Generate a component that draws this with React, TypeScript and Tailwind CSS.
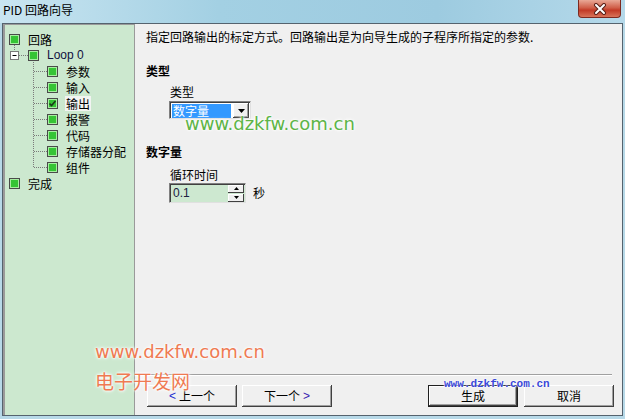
import React from "react";

const CJK = { fontFamily: '"Noto Sans CJK SC", "Liberation Sans", sans-serif' };

function Check({ checked }: { checked?: boolean }) {
  return (
    <div className="relative w-[11px] h-[11px] shrink-0 border border-[#4a4a4a] bg-[#35c435] shadow-[inset_0_0_0_1px_#a6eea0]">
      {checked && (
        <svg className="absolute left-0 top-0" width="9" height="9" viewBox="0 0 9 9">
          <path d="M1.5 4.5 L3.5 6.5 L7.5 2" fill="none" stroke="#1a3a1a" strokeWidth="1.6" />
        </svg>
      )}
    </div>
  );
}

type Row = { label: string; level: number; checked?: boolean; sel?: boolean; latin?: boolean };

const rows: Row[] = [
  { label: "回路", level: 0 },
  { label: "Loop 0", level: 1, latin: true },
  { label: "参数", level: 2 },
  { label: "输入", level: 2 },
  { label: "输出", level: 2, checked: true, sel: true },
  { label: "报警", level: 2 },
  { label: "代码", level: 2 },
  { label: "存储器分配", level: 2 },
  { label: "组件", level: 2 },
  { label: "完成", level: 0 },
];

const levelPad = ["pl-[4px]", "pl-[23px]", "pl-[42px]"];

function Btn({ children, def }: { children: React.ReactNode; def?: boolean }) {
  return (
    <div
      className={
        "w-[90px] h-[22px] flex items-center justify-center bg-[#f0f0f0] text-[12px] text-black " +
        (def
          ? "border border-[#202020] shadow-[inset_-1px_-1px_#404040,inset_1px_1px_#ffffff,inset_-2px_-2px_#a0a0a0]"
          : "shadow-[inset_-1px_-1px_#404040,inset_1px_1px_#ffffff,inset_-2px_-2px_#a0a0a0]")
      }
      style={CJK}
    >
      {children}
    </div>
  );
}

export default function App() {
  const childCenters = [2, 3, 4, 5, 6, 7, 8].map((i) => 39 + 16 * i - 25 + 0.5);
  return (
    <div className="relative w-[625px] h-[419px] bg-[#b7d9e8] flex flex-col overflow-hidden">
      {/* Title bar */}
      <div className="h-[23px] flex items-start justify-between bg-[linear-gradient(90deg,#c9e5f1_0%,#a3d0e3_35%,#9dcbe0_70%,#b5d9ea_100%)]">
        <div className="pl-[3px] pt-[2px] text-[12px] leading-[16px] text-black" style={CJK}>
          PID 回路向导
        </div>
        <div className="mr-[4px] w-[43px] h-[18px] rounded-b-[4px] border border-t-0 border-[#7d2a20] bg-[linear-gradient(180deg,#e9a896_0%,#d0604a_45%,#c23a26_60%,#d8745a_100%)] flex items-center justify-center">
          <svg width="14" height="12" viewBox="0 0 14 12">
            <path d="M3 2 L11 10 M11 2 L3 10" stroke="#5a2018" strokeWidth="4" strokeLinecap="round" />
            <path d="M3 2 L11 10 M11 2 L3 10" stroke="#ffffff" strokeWidth="2" strokeLinecap="round" />
          </svg>
        </div>
      </div>

      {/* Body */}
      <div className="mx-[2px] h-[393px] border border-[#55636e] bg-[#f0f0f0] flex">
        {/* Tree */}
        <div className="relative w-[132px] h-full border-l-2 border-t border-r border-[#9a9a9a] bg-[#cce8cf] pt-[6px]">
          <svg className="absolute left-0 top-0" width="130" height="390" viewBox="0 0 130 390">
            <g stroke="#7a7a7a" strokeWidth="1" strokeDasharray="1 1" fill="none">
              <path d="M9.5 20 V26" />
              <path d="M14 30.5 H23" />
              <path d="M28.5 35 V143" />
              {childCenters.map((y, i) => (
                <path key={i} d={`M29 ${y} H42`} />
              ))}
            </g>
            <rect x="5.5" y="26.5" width="8" height="8" fill="#ffffff" stroke="#7a7a7a" />
            <path d="M7.5 30.5 H11.5" stroke="#000" strokeWidth="1" />
          </svg>
          {rows.map((r, i) => (
            <div key={i} className={"h-[16px] flex items-center " + levelPad[r.level]}>
              <Check checked={r.checked} />
              <span
                className={
                  "ml-[7px] px-[1px] text-[12px] leading-[15px] " +
                  (r.sel ? "bg-[#f2f4f2]" : "") +
                  (r.latin ? " text-[#101040]" : " text-black")
                }
                style={r.latin ? { fontFamily: '"Liberation Sans", sans-serif' } : CJK}
              >
                {r.label}
              </span>
            </div>
          ))}
        </div>

        {/* Right panel */}
        <div className="flex-1 flex flex-col" style={CJK}>
          <div className="pl-[11px] pt-[5px] text-[12px] leading-[16px] text-black">
            指定回路输出的标定方式。回路输出是为向导生成的子程序所指定的参数.
          </div>
          <div className="pl-[11px] mt-[18px] text-[12px] leading-[16px] font-bold text-black">类型</div>
          <div className="pl-[35px] mt-[5px] text-[12px] leading-[16px] text-black">类型</div>
          <div className="ml-[34px] mt-[1px] w-[82px] h-[18px] flex items-center bg-white border border-t-[#808080] border-l-[#808080] border-r-[#e0e0e0] border-b-[#e0e0e0] shadow-[inset_1px_1px_#404040]">
            <div className="ml-[2px] mt-[1px] w-[59px] h-[14px] bg-[#3399ff] text-white text-[12px] leading-[14px] pl-[1px]">
              数字量
            </div>
            <div className="ml-auto mr-[1px] mt-[1px] w-[16px] h-[15px] bg-[#f0f0f0] shadow-[inset_-1px_-1px_#404040,inset_1px_1px_#ffffff,inset_-2px_-2px_#a0a0a0] flex items-center justify-center">
              <svg width="7" height="4" viewBox="0 0 7 4">
                <path d="M0 0 H7 L3.5 4 Z" fill="#000" />
              </svg>
            </div>
          </div>
          <div className="pl-[11px] mt-[25px] text-[12px] leading-[16px] font-bold text-black">数字量</div>
          <div className="pl-[35px] mt-[7px] text-[12px] leading-[16px] text-black">循环时间</div>
          <div className="flex items-center">
            <div className="ml-[34px] w-[77px] h-[20px] flex items-center bg-[#cde8d0] border border-t-[#808080] border-l-[#808080] border-r-[#e0e0e0] border-b-[#e0e0e0] shadow-[inset_1px_1px_#404040]">
              <span className="pl-[3px] text-[12px] text-[#202040]" style={{ fontFamily: '"Liberation Sans", sans-serif' }}>
                0.1
              </span>
              <div className="ml-auto mr-[1px] w-[16px] h-[17px] flex flex-col">
                <div className="h-[8px] bg-[#f0f0f0] shadow-[inset_-1px_-1px_#404040,inset_1px_1px_#ffffff] flex items-center justify-center">
                  <svg width="5" height="3" viewBox="0 0 5 3"><path d="M2.5 0 L5 3 H0 Z" fill="#000" /></svg>
                </div>
                <div className="mt-[1px] h-[8px] bg-[#f0f0f0] shadow-[inset_-1px_-1px_#404040,inset_1px_1px_#ffffff] flex items-center justify-center">
                  <svg width="5" height="3" viewBox="0 0 5 3"><path d="M0 0 H5 L2.5 3 Z" fill="#000" /></svg>
                </div>
              </div>
            </div>
            <span className="ml-[7px] text-[12px] text-black">秒</span>
          </div>

          <div className="flex-1" />
          <div className="mr-[10px] h-[2px] border-t border-[#a0a0a0] border-b border-b-white" />
          <div className="mt-[9px] mb-[8px] pl-[12px] pr-[8px] flex items-center">
            <Btn>
              <span className="text-[#1a2ad0] mr-[3px]" style={{ fontFamily: '"Liberation Sans", sans-serif' }}>&lt;</span>上一个
            </Btn>
            <div className="ml-[5px]">
              <Btn>
                下一个<span className="text-[#3a1ab0] ml-[3px]" style={{ fontFamily: '"Liberation Sans", sans-serif' }}>&gt;</span>
              </Btn>
            </div>
            <div className="ml-auto">
              <Btn def>生成</Btn>
            </div>
            <div className="ml-[6px]">
              <Btn>取消</Btn>
            </div>
          </div>
        </div>
      </div>
      <div className="flex-1" />

      {/* Watermarks overlaid */}
      <div
        className="absolute left-[185px] top-[113px] text-[18px] leading-[22px] text-[#5db447] [text-shadow:0_0_2px_#fff,0_0_3px_#fff,0_0_4px_#fff]"
        style={{ fontFamily: '"DejaVu Sans", sans-serif' }}
      >
        www.dzkfw.com.cn
      </div>
      <div
        className="absolute left-[95px] top-[341px] text-[18px] leading-[22px] text-[#ef7a52] [text-shadow:0_0_2px_#fff,0_0_3px_#fff,0_0_4px_#fff]"
        style={{ fontFamily: '"DejaVu Sans", sans-serif' }}
      >
        www.dzkfw.com.cn
      </div>
      <div
        className="absolute left-[95px] top-[369px] text-[19px] leading-[24px] text-[#ef7a52] [text-shadow:0_0_2px_#fff,0_0_3px_#fff,0_0_4px_#fff]"
        style={CJK}
      >
        电子开发网
      </div>
      <div
        className="absolute left-[444px] top-[377px] text-[11px] leading-[14px] font-bold text-[#3a48d8] [text-shadow:0_0_2px_#fff,0_0_2px_#fff]"
        style={{ fontFamily: '"Liberation Mono", monospace' }}
      >
        www.dzkfw.com.cn
      </div>
    </div>
  );
}
